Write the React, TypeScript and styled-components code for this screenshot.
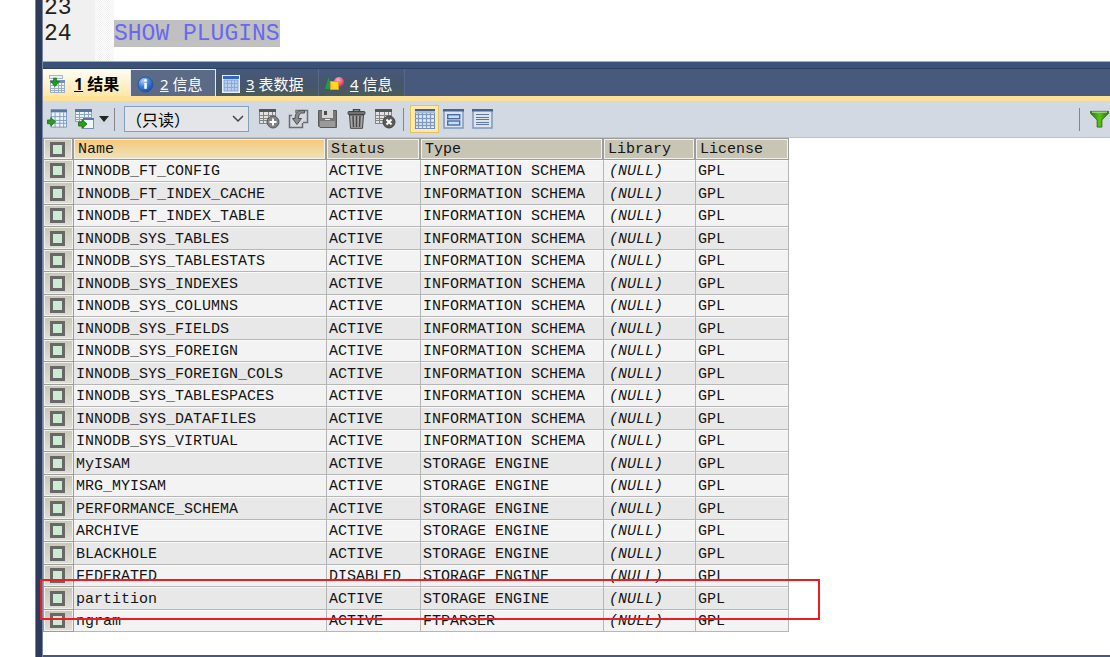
import React from "react";
import styled, { createGlobalStyle } from "styled-components";

const GlobalStyle = createGlobalStyle`
  * { box-sizing: border-box; }
  body { margin: 0; background: #ffffff; overflow: hidden; }
`;

const mono = `"Courier New", "Liberation Mono", "Noto Sans CJK SC", monospace`;
const ui = `"Noto Sans", "Noto Sans CJK SC", sans-serif`;

const Shell = styled.div`
  display: flex;
  height: 100vh;
  padding-left: 35px;
`;

const Splitter = styled.div`
  flex: none;
  width: 8px;
  background: #2c3a5c;
  border: solid #7a86a0;
  border-width: 0 1px;
`;

const Workspace = styled.main`
  flex: 1;
  min-width: 0;
  display: flex;
  flex-direction: column;
  border-bottom: 2px solid #465a7d;
`;

const Editor = styled.section`
  flex: none;
  display: flex;
  height: 61px;
  overflow: hidden;
  font-family: ${mono};
  font-size: 23px;
  line-height: 26px;
`;

const Gutter = styled.div`
  width: 52px;
  padding-left: 1px;
  background: #f0f0f0;
  color: #222222;
`;

const LineNumber = styled.div<{ $clipped?: boolean }>`
  margin-top: ${(p) => (p.$clipped ? "-5px" : "0")};
`;

const FoldMargin = styled.div`
  width: 19px;
  background: repeating-conic-gradient(#f0f0f0 0 25%, #ffffff 0 50%) 0 0 / 2px 2px;
`;

const Code = styled.div`
  flex: 1;
  padding-top: 20px;
`;

const Selected = styled.span`
  display: inline-block;
  padding-top: 1px;
  background: #c0c0c0;
  color: #6868f0;
`;

const PaneEdge = styled.div`
  flex: none;
  height: 8px;
  background: #3a5278;
  border-top: 1px solid #a4acba;
  border-bottom: 1px solid #2c405f;
`;

const TabBar = styled.div`
  flex: none;
  display: flex;
  height: 32px;
  background: #475a7d;
  border-bottom: 5px solid #ffe196;
`;

const Tab = styled.button<{ $kind: "active" | "hover" | "plain"; $width: number }>`
  flex: none;
  display: flex;
  align-items: center;
  width: ${(p) => p.$width}px;
  height: 27px;
  margin: 0;
  padding: 2px 0 0 6px;
  gap: ${(p) => (p.$kind === "active" ? 8 : 6)}px;
  border: 0 solid;
  border-width: ${(p) => (p.$kind === "hover" ? "1px 1px 0 0" : "0 1px 0 0")};
  border-color: ${(p) => (p.$kind === "plain" ? "#58668a" : "#e6e8ee")};
  background: ${(p) =>
    p.$kind === "active"
      ? "linear-gradient(#fffdf6, #ffe7a9)"
      : p.$kind === "hover"
      ? "#5b6a86"
      : "linear-gradient(#46587e, #475669 60%, #475c5c)"};
  color: ${(p) => (p.$kind === "active" ? "#000000" : "#ffffff")};
  font-family: ${ui};
  font-size: ${(p) => (p.$kind === "active" ? 16 : 15)}px;
  font-weight: ${(p) => (p.$kind === "active" ? 700 : 400)};
  line-height: 20px;
  white-space: nowrap;
`;

const Toolbar = styled.div`
  flex: none;
  display: flex;
  align-items: center;
  height: 37px;
  padding: 0 0 0 3px;
  background: #d2d9e3;
  border-bottom: 1px solid #bcc0c8;
`;

const ToolButton = styled.button<{ $on?: boolean; $width?: number }>`
  flex: none;
  display: flex;
  align-items: center;
  justify-content: center;
  gap: 4px;
  width: ${(p) => p.$width ?? 29}px;
  height: 28px;
  padding: 0;
  border: 1px solid ${(p) => (p.$on ? "#e5c365" : "transparent")};
  background: ${(p) => (p.$on ? "#ffe9a6" : "transparent")};
`;

const ToolGroup = styled.div<{ $gap?: number }>`
  flex: none;
  display: flex;
  gap: ${(p) => p.$gap ?? 0}px;
`;

const Separator = styled.div<{ $before?: string; $after?: number }>`
  flex: none;
  width: 1px;
  height: 23px;
  margin: 0 ${(p) => p.$after ?? 9}px 0 ${(p) => p.$before ?? "3px"};
  background: #808690;
`;

const ModeField = styled.label`
  position: relative;
  flex: none;
  width: 125px;
  margin-right: 6px;
  svg {
    position: absolute;
    right: 5px;
    top: 9px;
    pointer-events: none;
  }
`;

const ModeSelect = styled.select`
  appearance: none;
  display: block;
  width: 100%;
  height: 26px;
  padding: 0 0 2px 1px;
  border: 1px solid #82a0bc;
  border-radius: 0;
  background: #e3e5e8;
  color: #000000;
  font-family: "Noto Sans CJK SC", sans-serif;
  font-size: 16px;
`;

const GridArea = styled.section`
  flex: 1;
  min-height: 0;
  background: #ffffff;
`;

const Grid = styled.table`
  width: 746px;
  table-layout: fixed;
  border-collapse: separate;
  border-spacing: 0;
  font-family: ${mono};
  font-size: 15px;
  line-height: 18px;
  color: #141414;
`;

const HeadCell = styled.th<{ $sorted?: boolean }>`
  height: 22px;
  padding: 2px 0 0 4px;
  text-align: left;
  font-weight: 400;
  white-space: nowrap;
  border: solid #9c9c9c;
  border-width: 1px 2px 1px 0;
  background: ${(p) => (p.$sorted ? "linear-gradient(#f6c878, #efe2bc)" : "#c9c5b5")};
  box-shadow: inset 0 0 0 1px #f2f1ea;
  &:last-child { border-right-width: 1px; }
`;

const Row = styled.tr`
  position: relative;
  background: #f3f3f3;
  &:nth-child(even) { background: #e8e8e8; }
`;

const Cell = styled.td<{ $nil?: boolean }>`
  height: 22px;
  padding: 3px 0 0 ${(p) => (p.$nil ? 5 : 2)}px;
  white-space: nowrap;
  font-style: ${(p) => (p.$nil ? "italic" : "normal")};
  border: solid #b6b6b6;
  border-width: 0 1px 1px 0;
  box-shadow: inset 0 1px 0 #fafafa;
  tr:nth-child(even) > & { height: 23px; }
`;

const PickCell = styled(Cell)`
  padding: 0;
  background: linear-gradient(#c9c6b6, #e0dfd8);
  box-shadow: inset 0 0 0 1px #f0f0ec;
  border-color: #9c9c9c;
  border-left-width: 1px;
`;

const PickHead = styled(HeadCell)`
  padding: 0;
  background: linear-gradient(#c9c6b6, #e0dfd8);
  border-left-width: 1px;
`;

const Tick = styled.input`
  appearance: none;
  display: block;
  width: 15px;
  height: 15px;
  margin: 0 0 0 6px;
  border: 3px solid #686868;
  background: #cdebd2;
`;

const Callout = styled.span`
  position: absolute;
  z-index: 1;
  top: -8px;
  bottom: -10px;
  left: -3px;
  right: -31px;
  border: 2px solid #ed1c24;
  pointer-events: none;
`;

const schema = "INFORMATION SCHEMA";
const engine = "STORAGE ENGINE";
const plugins: [string, string, string][] = [
  ...[
    "INNODB_FT_CONFIG",
    "INNODB_FT_INDEX_CACHE",
    "INNODB_FT_INDEX_TABLE",
    "INNODB_SYS_TABLES",
    "INNODB_SYS_TABLESTATS",
    "INNODB_SYS_INDEXES",
    "INNODB_SYS_COLUMNS",
    "INNODB_SYS_FIELDS",
    "INNODB_SYS_FOREIGN",
    "INNODB_SYS_FOREIGN_COLS",
    "INNODB_SYS_TABLESPACES",
    "INNODB_SYS_DATAFILES",
    "INNODB_SYS_VIRTUAL",
  ].map((n): [string, string, string] => [n, "ACTIVE", schema]),
  ["MyISAM", "ACTIVE", engine],
  ["MRG_MYISAM", "ACTIVE", engine],
  ["PERFORMANCE_SCHEMA", "ACTIVE", engine],
  ["ARCHIVE", "ACTIVE", engine],
  ["BLACKHOLE", "ACTIVE", engine],
  ["FEDERATED", "DISABLED", engine],
  ["partition", "ACTIVE", engine],
  ["ngram", "ACTIVE", "FTPARSER"],
];

function Sheet({ x = 0, y = 0, w = 16, h = 16, line = "#7c92b4", head = "#5875a4", fill = "#eef3fa" }) {
  const inner = h - 4;
  return (
    <g transform={`translate(${x} ${y})`}>
      <rect x="0.5" y="0.5" width={w - 1} height={h - 1} fill={fill} stroke={line} />
      <rect width={w} height="3" fill={head} />
      <path
        d={[1, 2, 3].map((i) => `M${Math.round((w * i) / 4) + 0.5} 3V${h}M0 ${Math.round(3 + (inner * i) / 4) + 0.5}H${w}`).join("")}
        stroke={line}
        fill="none"
      />
    </g>
  );
}

const ResultIcon = () => (
  <svg width="17" height="18" viewBox="0 0 17 18">
    <rect x="0.5" y="0.5" width="13" height="3" fill="#edf1f7" stroke="#a8b6ca" />
    <Sheet x={1} y={5} w={15} h={13} line="#9cafca" head="#7890b4" />
    <path d="M4.500 3H7.500V6.500H10.500L6 11.500L1.500 6.500H4.500Z" fill="#18a018" stroke="#087008" strokeWidth="0.600" />
  </svg>
);

const InfoIcon = () => (
  <svg width="17" height="17" viewBox="0 0 17 17">
    <defs>
      <radialGradient id="ball" cx="35%" cy="25%" r="80%">
        <stop offset="0" stopColor="#a9d0ff" />
        <stop offset="0.500" stopColor="#3d7fd8" />
        <stop offset="1" stopColor="#164a9c" />
      </radialGradient>
    </defs>
    <circle cx="8.500" cy="8.500" r="7.500" fill="url(#ball)" stroke="#2759a0" />
    <circle cx="8.500" cy="4.500" r="1.400" fill="#fff" />
    <rect x="7.300" y="6.800" width="2.500" height="6" fill="#fff" />
  </svg>
);

const DataIcon = () => (
  <svg width="18" height="18" viewBox="0 0 18 18">
    <rect x="0.500" y="0.500" width="17" height="17" fill="#fff" stroke="#e8eef8" />
    <rect x="1" y="1" width="16" height="3" fill="#3567bd" />
    <rect x="2" y="5" width="14" height="11" fill="#b9cdec" stroke="#7d9cd0" />
    <path d="M5.500 5V16M9.500 5V16M12.500 5V16M2 8.500H16M2 12.500H16" stroke="#8aa8d8" />
  </svg>
);

const ShapesIcon = () => (
  <svg width="19" height="16" viewBox="0 0 19 16">
    <defs>
      <radialGradient id="pink" cx="40%" cy="30%" r="70%">
        <stop offset="0" stopColor="#ffb4c8" />
        <stop offset="1" stopColor="#d42858" />
      </radialGradient>
    </defs>
    <path d="M3.500 1L7 13H0Z" fill="#18a048" />
    <circle cx="14" cy="6" r="5" fill="url(#pink)" />
    <rect x="5.500" y="5.500" width="8" height="8" fill="#ffd52c" stroke="#e69d12" />
  </svg>
);

const GreenArrow = ({ x, y }: { x: number; y: number }) => (
  <path transform={`translate(${x} ${y})`} d="M0.500 3H4V0.500L9 5L4 9.500V7H0.500Z" fill="#28a01c" stroke="#146c0c" strokeWidth="0.800" />
);

const InsertIcon = () => (
  <svg width="21" height="20" viewBox="0 0 21 20">
    <Sheet x={4} w={17} h={19} line="#7f9abe" />
    <GreenArrow x={0} y={8} />
  </svg>
);

const ExportIcon = () => (
  <svg width="20" height="20" viewBox="0 0 20 20">
    <Sheet w={17} h={13} line="#8ca3c4" />
    <rect x="8.500" y="9.500" width="10" height="10" fill="#f2f5fa" stroke="#7890b4" />
    <rect x="8" y="9" width="11" height="2" fill="#5875a4" />
    <GreenArrow x={3} y={10} />
  </svg>
);

const AddRowIcon = () => (
  <svg width="21" height="20" viewBox="0 0 21 20">
    <Sheet w={17} h={15} line="#858585" head="#555555" fill="#e2e2e2" />
    <circle cx="14" cy="13" r="6" fill="#828282" stroke="#555" />
    <path d="M14 9.500V16.500M10.500 13H17.500" stroke="#fff" strokeWidth="2" />
  </svg>
);

const CopyRowIcon = () => (
  <svg width="21" height="20" viewBox="0 0 21 20">
    <path d="M8 4V1.500H19.500V13.500H15M4 6.500H1.500V18.500H14.500V14" fill="none" stroke="#6d6d6d" strokeWidth="1.500" />
    <path d="M16.500 4C12 3.500 10.500 5.500 10.500 9.500H13.500L9 15.500L4.500 9.500H7C7 4 10 0.800 16.500 1.500Z" fill="#8b8b8b" stroke="#505050" />
  </svg>
);

const SaveIcon = () => (
  <svg width="19" height="18" viewBox="0 0 19 18">
    <path d="M0.500 0.500H18.500V17.500H2L0.500 16Z" fill="#777777" stroke="#5a5a5a" />
    <rect x="4" y="0" width="11" height="8" fill="#d5d5d5" />
    <rect x="6" y="1" width="3" height="4" fill="#4c4c4c" />
    <rect x="2" y="11" width="15" height="6" fill="#9a9a9a" />
    <path d="M7 9.500H12" stroke="#eee" />
  </svg>
);

const TrashIcon = () => (
  <svg width="19" height="20" viewBox="0 0 19 20">
    <path d="M6.500 3V0.800H12.500V3" fill="none" stroke="#444" strokeWidth="1.500" />
    <rect x="1" y="2.500" width="17" height="3" rx="1" fill="#727272" stroke="#444" />
    <path d="M2.500 6H16.500L15.500 19.300H3.500Z" fill="#a5a5a5" stroke="#444" />
    <path d="M6 7L6.500 18M9.500 7V18M13 7L12.500 18" stroke="#484848" strokeWidth="1.500" />
  </svg>
);

const CancelIcon = () => (
  <svg width="21" height="20" viewBox="0 0 21 20">
    <Sheet w={17} h={15} line="#858585" head="#555555" fill="#e2e2e2" />
    <circle cx="14" cy="13" r="6" fill="#5b5b5b" stroke="#444" />
    <path d="M11.500 10.500L16.500 15.500M16.500 10.500L11.500 15.500" stroke="#fff" strokeWidth="2" />
  </svg>
);

const GridViewIcon = () => (
  <svg width="20" height="20" viewBox="0 0 20 20">
    <rect x="0.500" y="0.500" width="19" height="19" fill="#eef1f3" stroke="#6f8bb5" />
    <rect width="20" height="2" fill="#45628f" />
    <rect y="2" width="20" height="2" fill="#a8bbd4" />
    <path d="M3.500 4V20M7.500 4V20M11.500 4V20M15.500 4V20M0 5.500H20M0 9.500H20M0 13.500H20M0 16.500H20" stroke="#829bc0" strokeWidth="1.300" />
  </svg>
);

const FormViewIcon = () => (
  <svg width="21" height="20" viewBox="0 0 21 20">
    <rect x="1" y="1" width="19" height="18" fill="#dce3ed" stroke="#7e98be" strokeWidth="1.500" />
    <rect width="21" height="2.500" fill="#48648f" />
    <rect x="4.700" y="5.700" width="12" height="4" fill="#c4dcff" stroke="#4c6c9f" strokeWidth="1.400" />
    <rect x="4.700" y="12" width="12" height="4" fill="#c4dcff" stroke="#4c6c9f" strokeWidth="1.400" />
  </svg>
);

const TextViewIcon = () => (
  <svg width="21" height="20" viewBox="0 0 21 20">
    <rect x="1" y="1" width="19" height="18" fill="#dce3ed" stroke="#7e98be" strokeWidth="1.500" />
    <rect width="21" height="2.500" fill="#48648f" />
    <path d="M4 5.500H17M4 8.500H17M4 10.500H17M4 13.500H17M4 15.500H17" stroke="#60779c" strokeWidth="1.200" />
  </svg>
);

const FilterIcon = () => (
  <svg width="20" height="18" viewBox="0 0 20 18">
    <defs>
      <linearGradient id="leaf">
        <stop offset="0" stopColor="#257b0c" />
        <stop offset="0.500" stopColor="#5cc018" />
        <stop offset="1" stopColor="#257b0c" />
      </linearGradient>
    </defs>
    <path d="M0.500 1H19.500V3L12.500 10V17.500H7.500V10L0.500 3Z" fill="url(#leaf)" stroke="#35701c" />
    <path d="M2 1.800H18" stroke="#c8e8b8" />
  </svg>
);

const Caret = () => (
  <svg width="10" height="6" viewBox="0 0 10 6">
    <path d="M0 0H10L5 6Z" fill="#252525" />
  </svg>
);

export default function App() {
  return (
    <>
      <GlobalStyle />
      <Shell>
        <Splitter />
        <Workspace>
          <Editor>
            <Gutter>
              <LineNumber $clipped>23</LineNumber>
              <LineNumber>24</LineNumber>
            </Gutter>
            <FoldMargin />
            <Code>
              <Selected>SHOW PLUGINS</Selected>
            </Code>
          </Editor>
          <PaneEdge />
          <TabBar role="tablist">
            <Tab role="tab" aria-selected $kind="active" $width={88}>
              <ResultIcon />
              <span><u>1</u> 结果</span>
            </Tab>
            <Tab role="tab" $kind="hover" $width={85}>
              <InfoIcon />
              <span><u>2</u> 信息</span>
            </Tab>
            <Tab role="tab" $kind="plain" $width={103}>
              <DataIcon />
              <span><u>3</u> 表数据</span>
            </Tab>
            <Tab role="tab" $kind="plain" $width={86}>
              <ShapesIcon />
              <span><u>4</u> 信息</span>
            </Tab>
          </TabBar>
          <Toolbar>
            <ToolGroup $gap={4}>
              <ToolButton $width={22} aria-label="Insert row"><InsertIcon /></ToolButton>
              <ToolButton $width={39} aria-label="Export"><ExportIcon /><Caret /></ToolButton>
            </ToolGroup>
            <Separator />
            <ModeField>
              <ModeSelect aria-label="Result mode" defaultValue="ro">
                <option value="ro">（只读）</option>
              </ModeSelect>
              <svg width="12" height="8" viewBox="0 0 12 8">
                <path d="M1 1L6 6L11 1" fill="none" stroke="#444" strokeWidth="1.500" />
              </svg>
            </ModeField>
            <ToolGroup>
              <ToolButton aria-label="Add row"><AddRowIcon /></ToolButton>
              <ToolButton aria-label="Duplicate row"><CopyRowIcon /></ToolButton>
              <ToolButton aria-label="Save"><SaveIcon /></ToolButton>
              <ToolButton aria-label="Delete"><TrashIcon /></ToolButton>
              <ToolButton aria-label="Cancel changes"><CancelIcon /></ToolButton>
            </ToolGroup>
            <Separator $after={6} />
            <ToolGroup>
              <ToolButton $on aria-label="Grid view"><GridViewIcon /></ToolButton>
              <ToolButton aria-label="Form view"><FormViewIcon /></ToolButton>
              <ToolButton aria-label="Text view"><TextViewIcon /></ToolButton>
            </ToolGroup>
            <Separator $before="auto" />
            <ToolButton $width={21} aria-label="Filter"><FilterIcon /></ToolButton>
          </Toolbar>
          <GridArea>
            <Grid>
              <colgroup>
                <col style={{ width: 31 }} />
                <col style={{ width: 253 }} />
                <col style={{ width: 94 }} />
                <col style={{ width: 183 }} />
                <col style={{ width: 92 }} />
                <col />
              </colgroup>
              <thead>
                <tr>
                  <PickHead><Tick type="checkbox" aria-label="Select all" /></PickHead>
                  <HeadCell $sorted>Name</HeadCell>
                  <HeadCell>Status</HeadCell>
                  <HeadCell>Type</HeadCell>
                  <HeadCell>Library</HeadCell>
                  <HeadCell>License</HeadCell>
                </tr>
              </thead>
              <tbody>
                {plugins.map(([name, status, type]) => (
                  <Row key={name}>
                    <PickCell>
                      <Tick type="checkbox" aria-label={`Select ${name}`} />
                      {name === "partition" && <Callout />}
                    </PickCell>
                    <Cell>{name}</Cell>
                    <Cell>{status}</Cell>
                    <Cell>{type}</Cell>
                    <Cell $nil>(NULL)</Cell>
                    <Cell>GPL</Cell>
                  </Row>
                ))}
              </tbody>
            </Grid>
          </GridArea>
        </Workspace>
      </Shell>
    </>
  );
}
